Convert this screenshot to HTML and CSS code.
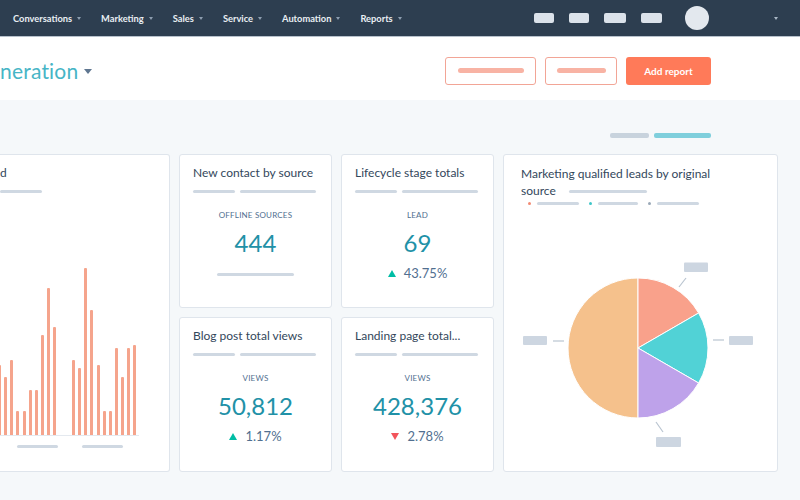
FILE: index.html
```html
<!DOCTYPE html>
<html lang="en">
<head>
<meta charset="utf-8">
<title>Dashboard</title>
<link rel="stylesheet" href="styles.css">
</head>
<body>
<nav class="topnav">
  <ul class="menu">
    <li>Conversations <span class="caret"></span></li>
    <li>Marketing <span class="caret"></span></li>
    <li>Sales <span class="caret"></span></li>
    <li>Service <span class="caret"></span></li>
    <li>Automation <span class="caret"></span></li>
    <li>Reports <span class="caret"></span></li>
  </ul>
  <div class="tools">
    <span class="tool w20"></span>
    <span class="tool w20"></span>
    <span class="tool w22"></span>
    <span class="tool w21"></span>
    <span class="avatar"></span>
    <span class="caret acct"></span>
  </div>
</nav>

<header class="pagehead">
  <h1 class="title">neration <span class="dd"></span></h1>
  <div class="actions">
    <button class="btn outline b1"><span class="ph p1"></span></button>
    <button class="btn outline b2"><span class="ph p2"></span></button>
    <button class="btn primary">Add report</button>
  </div>
</header>

<main class="dash">
  <div class="tabs"><span class="tab grey"></span><span class="tab teal"></span></div>
  <div class="grid">
    <section class="card barcard">
      <h3 class="ctitle">d</h3>
      <div class="lines"><span class="l1"></span></div>
      <div class="chart">
        <span class="bar" style="height:70px"></span>
        <span class="bar" style="height:58px"></span>
        <span class="bar" style="height:75px"></span>
        <span class="bar" style="height:24px"></span>
        <span class="bar" style="height:24px"></span>
        <span class="bar" style="height:45px"></span>
        <span class="bar" style="height:45px"></span>
        <span class="bar" style="height:100px"></span>
        <span class="bar" style="height:147px"></span>
        <span class="bar" style="height:108px"></span>
        <span class="bar" style="height:0px"></span>
        <span class="bar" style="height:0px"></span>
        <span class="bar" style="height:75px"></span>
        <span class="bar" style="height:67px"></span>
        <span class="bar" style="height:167px"></span>
        <span class="bar" style="height:125px"></span>
        <span class="bar" style="height:70px"></span>
        <span class="bar" style="height:24px"></span>
        <span class="bar" style="height:24px"></span>
        <span class="bar" style="height:87px"></span>
        <span class="bar" style="height:58px"></span>
        <span class="bar" style="height:87px"></span>
        <span class="bar" style="height:90px"></span>
      </div>
      <div class="axis-labels"><span></span><span></span></div>
    </section>

    <section class="card stat">
      <h3 class="ctitle">New contact by source</h3>
      <div class="lines"><span class="l1"></span><span class="l2"></span></div>
      <p class="label">Offline sources</p>
      <p class="num">444</p>
      <div class="foot-line"></div>
    </section>

    <section class="card stat">
      <h3 class="ctitle">Lifecycle stage totals</h3>
      <div class="lines"><span class="l1"></span><span class="l2"></span></div>
      <p class="label">Lead</p>
      <p class="num">69</p>
      <p class="delta"><span class="up"></span>43.75%</p>
    </section>

    <section class="card piecard">
      <h3 class="ctitle two">Marketing qualified leads by original<br>source<span class="inline-bar"></span></h3>
      <div class="legend">
        <span class="dot salmon"></span><span class="lg"></span>
        <span class="dot teal"></span><span class="lg w40"></span>
        <span class="dot slate"></span><span class="lg"></span>
      </div>
      <svg class="pie" width="240" height="200" viewBox="0 0 240 200">
        <g stroke="#ffffff" stroke-width="1">
          <path d="M117 98 L117 168 A70 70 0 0 1 117 28 Z" fill="#f5c18c"/>
          <path d="M117 98 L117 28 A70 70 0 0 1 177.62 63 Z" fill="#f9a18b"/>
          <path d="M117 98 L177.62 63 A70 70 0 0 1 177.62 133 Z" fill="#51d2d6"/>
          <path d="M117 98 L177.62 133 A70 70 0 0 1 117 168 Z" fill="#bea2ea"/>
        </g>
        <g fill="#cdd6e1">
          <rect x="163" y="12.5" width="24" height="9.5" rx="1"/>
          <rect x="2" y="86" width="24" height="9" rx="1"/>
          <rect x="208" y="86" width="24" height="9" rx="1"/>
          <rect x="135" y="187" width="25" height="10" rx="1"/>
        </g>
        <g stroke="#b9c4d0" stroke-width="1.2">
          <line x1="165" y1="28" x2="158" y2="37"/>
          <line x1="32" y1="91" x2="43" y2="91"/>
          <line x1="192" y1="90" x2="203" y2="90"/>
          <line x1="135" y1="172" x2="142" y2="182"/>
        </g>
      </svg>
    </section>

    <section class="card stat">
      <h3 class="ctitle">Blog post total views</h3>
      <div class="lines"><span class="l1"></span><span class="l2"></span></div>
      <p class="label">Views</p>
      <p class="num">50,812</p>
      <p class="delta"><span class="up"></span>1.17%</p>
    </section>

    <section class="card stat">
      <h3 class="ctitle">Landing page total...</h3>
      <div class="lines"><span class="l1"></span><span class="l2"></span></div>
      <p class="label">Views</p>
      <p class="num">428,376</p>
      <p class="delta"><span class="down"></span>2.78%</p>
    </section>
  </div>
</main>
</body>
</html>
```

FILE: styles.css
```css
* { box-sizing: border-box; margin: 0; padding: 0; }
html, body { width: 800px; height: 500px; overflow: hidden; }
body {
  font-family: Lato, "Open Sans", sans-serif;
  background: #f5f8fa;
  color: #33475b;
}

/* top navigation */
.topnav {
  height: 37px;
  background: #2d3e50;
  border-bottom: 1px solid #b7c1cc;
  display: flex;
  align-items: center;
  padding: 0 22px 0 13px;
}
.menu { display: flex; gap: 20px; list-style: none; }
.menu li {
  display: flex;
  align-items: center;
  gap: 5px;
  color: #e9eef3;
  font-size: 9.3px;
  font-weight: 700;
}
.caret {
  width: 0; height: 0;
  border-left: 2.5px solid transparent;
  border-right: 2.5px solid transparent;
  border-top: 3px solid #8c9daf;
}
.tools { margin-left: auto; display: flex; align-items: center; gap: 15px; }
.tool { height: 10px; border-radius: 2px; background: #dbe2ea; }
.w20 { width: 20px; } .w21 { width: 21px; } .w22 { width: 22px; }
.avatar {
  width: 24px; height: 24px; border-radius: 50%;
  background: #e3e8ee; margin-left: 8px;
}
.caret.acct { margin-left: 50px; border-top-color: #a9b7c5; }

/* page header */
.pagehead {
  height: 63px;
  background: #fff;
  display: flex;
  align-items: center;
  justify-content: space-between;
  padding: 3px 89px 0 0;
}
.title {
  font-size: 21px;
  font-weight: 400;
  color: #47b5c6;
  display: flex;
  align-items: center;
  gap: 6px;
  letter-spacing: 0.2px;
}
.dd {
  width: 0; height: 0;
  border-left: 4.5px solid transparent;
  border-right: 4.5px solid transparent;
  border-top: 5px solid #5f7690;
  margin-top: 2px;
}
.actions { display: flex; gap: 9px; margin-top: 1px; }
.btn {
  height: 28px;
  border-radius: 3px;
  display: flex;
  align-items: center;
  justify-content: center;
  font-family: inherit;
}
.btn.outline { background: #fff; border: 1.5px solid #f2a596; }
.b1 { width: 91px; } .b2 { width: 72px; }
.btn.primary {
  width: 85px;
  background: #ff7a59;
  border: none;
  color: #fff;
  font-size: 10px;
  font-weight: 700;
}
.ph { display: block; height: 5px; border-radius: 3px; background: #f8b3a4; }
.p1 { width: 66px; } .p2 { width: 49px; }

/* dashboard */
.dash { padding: 33px 22px 0 0; }
.tabs { display: flex; justify-content: flex-end; gap: 5px; margin: 0 67px 16px 0; }
.tab { height: 5px; border-radius: 2px; }
.tab.grey { width: 39px; background: #c8d3dd; }
.tab.teal { width: 57px; background: #7fcfdc; }

.grid {
  display: grid;
  grid-template-columns: 170px 153px 153px 275px;
  grid-template-rows: 154px 155px;
  gap: 9px;
}
.card {
  background: #fff;
  border: 1px solid #dfe5ec;
  border-radius: 3px;
}
.ctitle {
  font-size: 12px;
  font-weight: 400;
  line-height: 14px;
  color: #33475b;
  text-align: left;
  white-space: nowrap;
}
.lines { display: flex; gap: 5px; margin-top: 10px; }
.lines span { display: block; height: 3px; border-radius: 2px; background: #cfd8e2; }
.l1 { width: 42px; } .l2 { width: 76px; }

/* stat cards */
.stat { padding: 11px 13px 0; text-align: center; }
.label {
  margin-top: 17px;
  font-size: 8px;
  line-height: 10px;
  color: #516f90;
  letter-spacing: 0.2px;
  text-transform: uppercase;
}
.num {
  margin-top: 9px;
  font-size: 24px;
  line-height: 28px;
  color: #2191a7;
}
.delta {
  margin-top: 9px;
  display: flex;
  justify-content: center;
  align-items: center;
  gap: 8px;
  font-size: 13px;
  line-height: 14px;
  color: #516f90;
}
.up {
  width: 0; height: 0;
  border-left: 4.5px solid transparent;
  border-right: 4.5px solid transparent;
  border-bottom: 7px solid #00bda5;
}
.down {
  width: 0; height: 0;
  border-left: 4.5px solid transparent;
  border-right: 4.5px solid transparent;
  border-top: 7px solid #f2545b;
}
.foot-line {
  width: 77px; height: 3px; margin: 16px auto 0;
  border-radius: 2px; background: #cfd8e2;
}

/* bar chart card */
.barcard {
  grid-row: span 2;
  border-left: none;
  border-radius: 0 3px 3px 0;
  padding-top: 11px;
  overflow: hidden;
}
.chart {
  margin: 57px 0 0 -2px;
  width: 141px;
  height: 186px;
  display: flex;
  align-items: flex-end;
  gap: 3.17px;
  border-bottom: 1px solid #e4e9ef;
}
.bar { display: block; width: 3px; background: #f5a48c; border-radius: 1px 1px 0 0; }
.axis-labels { display: flex; gap: 24px; margin: 9px 0 0 17px; }
.axis-labels span { display: block; width: 41px; height: 3px; border-radius: 2px; background: #cfd8e2; }

/* pie card */
.piecard { grid-row: span 2; grid-column: 4; padding: 10px 0 0 17px; }
.ctitle.two { line-height: 17px; }
.inline-bar {
  display: inline-block;
  vertical-align: middle;
  width: 78px; height: 3px;
  margin-left: 13px;
  border-radius: 2px;
  background: #cfd8e2;
}
.legend { display: flex; align-items: center; height: 6px; margin: 1px 0 0 7px; }
.dot { width: 3px; height: 3px; border-radius: 50%; }
.dot.salmon { background: #f28a73; }
.dot.teal { background: #3fc6c9; margin-left: 10px; }
.dot.slate { background: #9aa9b8; margin-left: 10px; }
.lg { display: block; width: 42px; height: 3px; margin-left: 6px; border-radius: 2px; background: #cfd8e2; }
.lg.w40 { width: 40px; }
.pie { display: block; margin-top: 44px; }
```
